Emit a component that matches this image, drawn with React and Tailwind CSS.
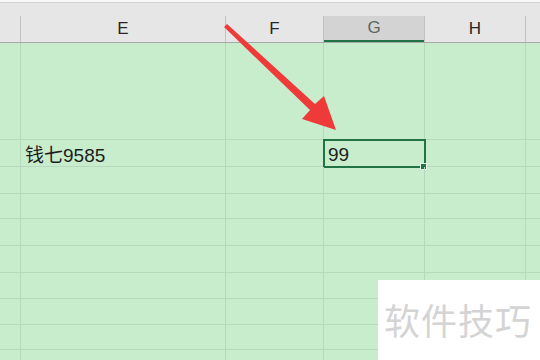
import React from 'react';

const cols = [
  { key: 'D', w: 'w-[21px]' },
  { key: 'E', w: 'w-[205px]' },
  { key: 'F', w: 'w-[98px]' },
  { key: 'G', w: 'w-[101px]' },
  { key: 'H', w: 'w-[101px]' },
  { key: 'I', w: 'flex-1' },
];

const rowHeights = ['h-[97px]', 'h-[27px]', 'h-[27px]', 'h-[25px]', 'h-[27px]', 'h-[27px]', 'h-[26px]', 'h-[26px]', 'h-[25px]', 'h-[30px]'];

const HeaderCell = ({ col }) => {
  const selected = col.key === 'G';
  const label = col.key === 'D' || col.key === 'I' ? '' : col.key;
  return (
    <div className={`${col.w} flex items-end shrink-0`}>
      <div
        className={`flex-1 h-[26px] flex items-center justify-center pb-[1px] ${
          selected ? 'bg-[#d3d3d3] border-b-2 border-[#217346] text-[#5b6660]' : 'text-[#262626]'
        }`}
      >
        {label}
      </div>
      {col.key !== 'I' && <div className="w-px h-[26px] bg-[#c2c2c2]" />}
    </div>
  );
};

const Cell = ({ col, row }) => {
  const last = col.key === 'I';
  let content = null;
  if (row === 1 && col.key === 'E') {
    content = <span className="pl-[4px] pt-[4px]">钱七9585</span>;
  }
  if (row === 1 && col.key === 'G') {
    content = (
      <>
        <span className="pl-[4px] pt-[3px]">99</span>
        <div className="absolute -top-px -left-px w-[103px] h-[29px] border-2 border-[#217346]" />
        <div className="absolute left-[96px] top-[23px] w-[7px] h-[7px] bg-[#217346] border border-[#e9f5eb]" />
      </>
    );
  }
  return (
    <div
      className={`${col.w} shrink-0 relative flex items-center ${last ? '' : 'border-r border-[#b8d8bd]'}`}
    >
      {content}
    </div>
  );
};

const App = () => {
  return (
    <div className="w-[540px] h-[360px] overflow-hidden relative bg-[#c7edcc] font-['Liberation_Sans','Noto_Sans_CJK_SC',sans-serif]">
      <div className="h-[2px] bg-[#f7f7f7]" />
      <div className="h-[41px] flex bg-[#e6e6e6] border-t border-b border-t-[#d4d4d4] border-b-[#a8a8a8] text-[17px]">
        {cols.map((c) => (
          <HeaderCell key={c.key} col={c} />
        ))}
      </div>

      <div className="flex flex-col text-[19px] leading-none text-[#1d1d1d]">
        {rowHeights.map((h, i) => (
          <div key={i} className={`${h} shrink-0 flex border-b border-[#b8d8bd]`}>
            {cols.map((c) => (
              <Cell key={c.key} col={c} row={i} />
            ))}
          </div>
        ))}
      </div>

      <svg className="absolute left-0 top-0 pointer-events-none" width="540" height="360">
        <polygon
          points="224,27 310,110 302,119 336,130 324,96 315,104 227,24"
          fill="#ef3a3a"
        />
      </svg>

      <div className="absolute left-[378px] top-[280px] w-[162px] h-[80px] bg-white flex items-center pl-[6px] pb-[2px]">
        <span className="text-[36px] leading-none text-[#d4d4d4] font-['Noto_Sans_CJK_SC',sans-serif] tracking-[1px]">
          软件技巧
        </span>
      </div>
    </div>
  );
};

export default App;
